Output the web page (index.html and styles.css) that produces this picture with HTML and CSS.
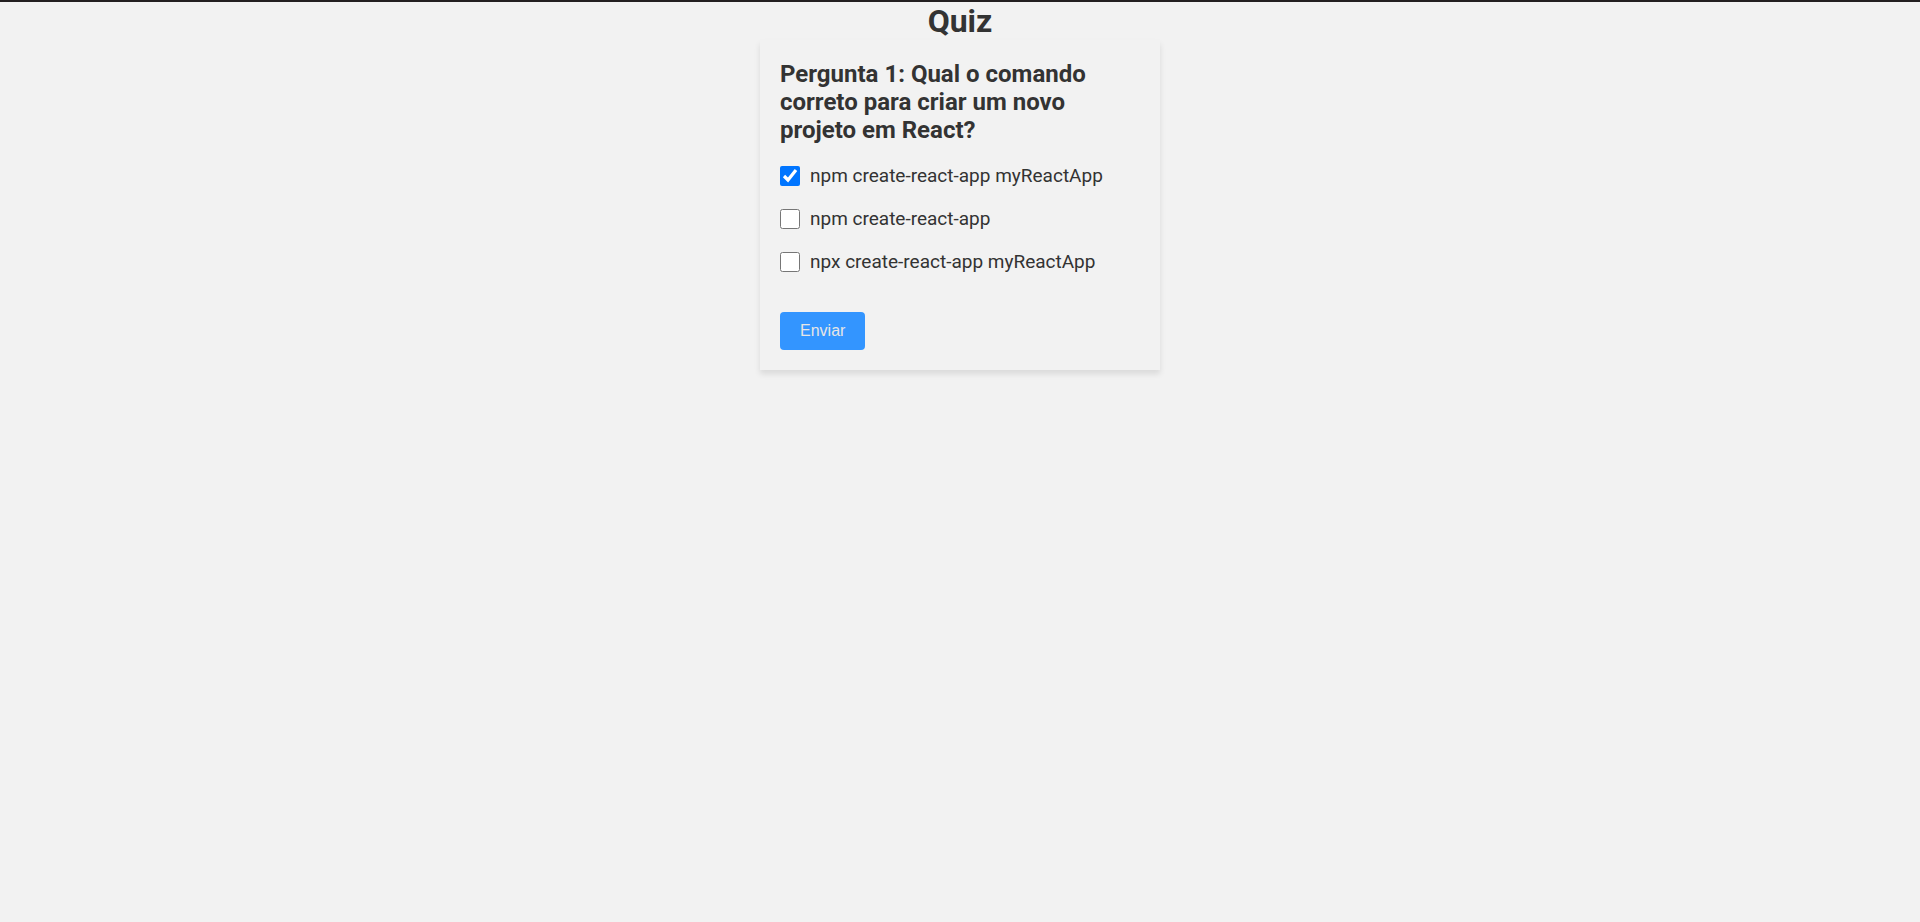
FILE: index.html
```html
<!DOCTYPE html>
<html lang="pt-BR">
<head>
<meta charset="utf-8">
<title>Quiz</title>
<link rel="stylesheet" href="styles.css">
</head>
<body>
<main class="page">
  <h1 class="title">Quiz</h1>
  <form class="card">
    <h2 class="question">Pergunta 1: Qual o comando correto para criar um novo projeto em React?</h2>
    <div class="options">
      <label class="option"><input class="check" type="checkbox" checked>npm create-react-app myReactApp</label>
      <label class="option"><input class="check" type="checkbox">npm create-react-app</label>
      <label class="option"><input class="check" type="checkbox">npx create-react-app myReactApp</label>
    </div>
    <button class="submit" type="button">Enviar</button>
  </form>
</main>
</body>
</html>
```
FILE: styles.css
```css
* {
  box-sizing: border-box;
  margin: 0;
  padding: 0;
}

body {
  min-height: 100vh;
  background: #f2f2f2;
  border-top: 2px solid #231f20;
  color: #333;
  font-family: Roboto, sans-serif;
}

.title {
  font-size: 32px;
  line-height: 38px;
  text-align: center;
}

.card {
  max-width: 400px;
  margin: 0 auto;
  padding: 20px;
  box-shadow: 0 4px 6px rgba(0, 0, 0, 0.1);
}

.question {
  margin-bottom: 20px;
  font-size: 24px;
  line-height: 28px;
}

.options {
  display: flex;
  flex-direction: column;
  gap: 19px;
  margin-bottom: 38px;
}

.option {
  display: flex;
  align-items: center;
  gap: 10px;
  font-size: 19px;
  line-height: 24px;
}

.check {
  width: 20px;
  height: 20px;
}

.submit {
  display: block;
  padding: 10px 20px;
  border: 0;
  border-radius: 4px;
  background: #3395ff;
  color: #e6e6e6;
  font: 16px/18px "Liberation Sans", Arial, sans-serif;
}
```
